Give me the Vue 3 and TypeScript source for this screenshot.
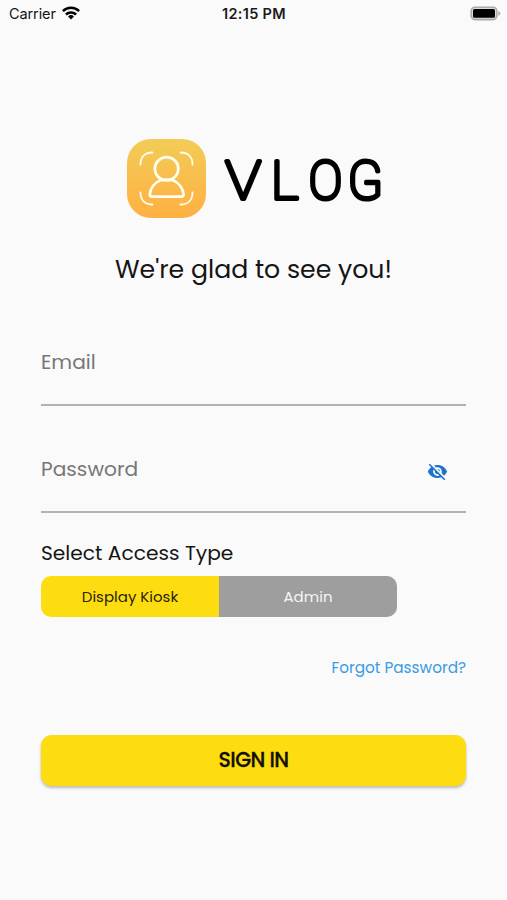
<script setup lang="ts">
import { ref } from 'vue'

type Access = 'kiosk' | 'admin'

const email = ref('')
const password = ref('')
const hidden = ref(true)
const access = ref<Access>('kiosk')
const options: { id: Access; label: string }[] = [
  { id: 'kiosk', label: 'Display Kiosk' },
  { id: 'admin', label: 'Admin' },
]
</script>

<template>
  <div class="screen">
    <header class="status">
      <div class="carrier">
        <span>Carrier</span>
        <svg class="wifi" viewBox="0 0 18 14" width="18" height="14">
          <g fill="none" stroke="#000" stroke-width="2.5">
            <path d="M.9 5.1a11.7 11.7 0 0 1 16.2 0" />
            <path d="M3.9 8.5a7.3 7.3 0 0 1 10.2 0" />
          </g>
          <path d="M9 13.4 6 10.5a4.3 4.3 0 0 1 6 0z" />
        </svg>
      </div>
      <span class="time">12:15 PM</span>
      <svg class="battery" viewBox="0 0 31 15" width="31" height="15">
        <rect x="1.2" y="1.2" width="25.6" height="12.4" rx="3.8" fill="#ddd" stroke="#aaa" stroke-width="1.6" />
        <rect x="3" y="3" width="22" height="8.8" rx="1.6" />
        <path d="M28.3 5v4.8q2-.7 2-2.4t-2-2.4z" fill="#aaa" />
      </svg>
    </header>

    <main>
      <div class="brand">
        <svg viewBox="0 0 79 79" width="79" height="79">
          <defs>
            <linearGradient id="badge" x1="0" y1="0" x2="0" y2="1">
              <stop offset="0" stop-color="#f2cc56" />
              <stop offset="1" stop-color="#ffb043" />
            </linearGradient>
          </defs>
          <rect width="79" height="79" rx="24" fill="url(#badge)" />
          <g fill="none" stroke="#fffdf0" stroke-linecap="round" stroke-linejoin="round">
            <g stroke-width="1.8">
              <path d="M13.5 25.5C13.5 18 18 13.5 25.5 13.5" />
              <path d="M53.5 13.5C61 13.5 65.5 18 65.5 25.5" />
              <path d="M65.5 53.5C65.5 61 61 65.5 53.5 65.5" />
              <path d="M25.5 65.5C18 65.5 13.5 61 13.5 53.5" />
            </g>
            <g stroke-width="2.7">
              <circle cx="39.6" cy="29.8" r="11.7" />
              <path d="M33.5 41.300C27.5 43.500 23 49.500 22.800 55.400Q22.700 57.600 25 57.600H54.500Q56.700 57.600 56.600 55.400C56.300 49.500 51.800 43.500 45.800 41.300Q39.600 39.800 33.500 41.300" />
            </g>
          </g>
        </svg>
        <svg class="wordmark" viewBox="0 0 186 79" width="186" height="79">
          <text transform="translate(7.3 60) scale(1.12 1)">V</text>
          <text transform="translate(53 60)">L</text>
          <text transform="translate(90.7 60) scale(.94 1)">O</text>
          <text transform="translate(129.8 60) scale(.96 1)">G</text>
        </svg>
      </div>

      <h1>We're glad to see you!</h1>

      <label class="field">
        <input v-model="email" class="email" type="email" placeholder="Email" />
      </label>
      <div class="field second">
        <input v-model="password" class="password" :type="hidden ? 'password' : 'text'" placeholder="Password" />
        <button class="eye" type="button" aria-label="Toggle password" @click="hidden = !hidden">
          <svg viewBox="0 0 24 24" width="21" height="21">
            <path
              fill="#1e72cf"
              d="M12 7c2.760 0 5 2.240 5 5 0 .65-.13 1.260-.36 1.830l2.920 2.920c1.510-1.260 2.700-2.890 3.430-4.750-1.730-4.390-6-7.500-11-7.500-1.400 0-2.740.25-3.980.7l2.160 2.160C10.740 7.130 11.350 7 12 7zM2 4.270l2.280 2.280.46.46C3.080 8.300 1.780 10.020 1 12c1.730 4.390 6 7.500 11 7.500 1.550 0 3.030-.3 4.380-.84l.42.42L19.730 22 21 20.730 3.270 3 2 4.270zM7.530 9.800l1.550 1.550c-.05.21-.08.43-.08.65 0 1.660 1.340 3 3 3 .22 0 .44-.03.65-.08l1.550 1.550c-.67.33-1.410.53-2.200.53-2.760 0-5-2.240-5-5 0-.79.2-1.530.53-2.200zm4.310-.78l3.150 3.150.02-.16c0-1.660-1.340-3-3-3l-.17.01z"
            />
          </svg>
        </button>
      </div>

      <h2>Select Access Type</h2>
      <div class="toggle">
        <button
          v-for="o in options"
          :key="o.id"
          type="button"
          :class="[o.id, { active: access === o.id }]"
          @click="access = o.id"
        >{{ o.label }}</button>
      </div>

      <a class="forgot">Forgot Password?</a>
      <button class="submit" type="button">SIGN IN</button>
    </main>
  </div>
</template>

<style>
body { margin: 0; background: #fafafa; }
</style>

<style scoped>
.screen {
  box-sizing: border-box;
  height: 900px;
  background: #fafafa;
  color: #151515;
  font-family: Poppins, Inter, sans-serif;
}
.status {
  display: grid;
  grid-template-columns: 1fr auto 1fr;
  align-items: center;
  height: 27px;
  padding: 0 6px 0 9px;
  font: 14.5px/27px Inter, sans-serif;
}
.carrier { display: flex; align-items: center; gap: 6px; letter-spacing: -.1px; }
.wifi { margin-top: -2px; }
.time { margin-left: -2px; font-weight: 600; letter-spacing: .3px; color: #1b1b1b; }
.battery { justify-self: end; }
main { display: flex; flex-direction: column; padding: 112px 41px 0; }
.brand { display: flex; align-items: center; height: 79px; padding-left: 86px; gap: 12px; }
.wordmark { flex: none; }
.wordmark text {
  font: 100 53.5px Roboto, sans-serif;
  fill: #000;
  stroke: #000;
  stroke-width: 4px;
  stroke-linejoin: round;
  vector-effect: non-scaling-stroke;
}
h1, h2 { margin: 0; font-weight: 400; }
h1 { margin: 32px -10px 0; height: 40px; text-align: center; font-size: 25.2px; line-height: 40px; white-space: nowrap; }
.field {
  display: flex;
  align-items: flex-start;
  box-sizing: border-box;
  height: 68px;
  margin-top: 48px;
  padding-top: 10px;
  border-bottom: 2px solid #b2b2b2;
}
.field.second { margin-top: 39px; }
input {
  flex: 1;
  min-width: 0;
  height: 28px;
  padding: 0;
  border: 0;
  outline: 0;
  background: none;
  font: 400 20.2px/28px Poppins, Inter, sans-serif;
}
input::placeholder { color: #777; opacity: 1; }
button { padding: 0; border: 0; font-family: inherit; cursor: pointer; }
.eye { display: flex; margin: 6px 18px 0 0; background: none; }
h2 { margin-top: 25px; height: 31px; font-size: 20.2px; line-height: 30px; }
.toggle { display: flex; width: 356px; height: 41px; margin-top: 7px; overflow: hidden; border-radius: 10px; }
.toggle button { flex: 1; background: #9e9e9e; color: #f5f5f5; font-size: 15px; }
.toggle .active { background: #fddd10; color: #2b2505; }
.forgot { align-self: flex-end; margin-top: 38px; height: 24px; color: #399be5; font-size: 15.3px; line-height: 25px; }
.submit {
  height: 51px;
  margin-top: 56px;
  padding-bottom: 2px;
  border-radius: 11px;
  background: #fddd10;
  box-shadow: 0 2px 3px rgba(0, 0, 0, .26);
  color: #121003;
  font-size: 20.5px;
  font-weight: 500;
  letter-spacing: -.55px;
  -webkit-text-stroke: .3px #121003;
}
</style>
